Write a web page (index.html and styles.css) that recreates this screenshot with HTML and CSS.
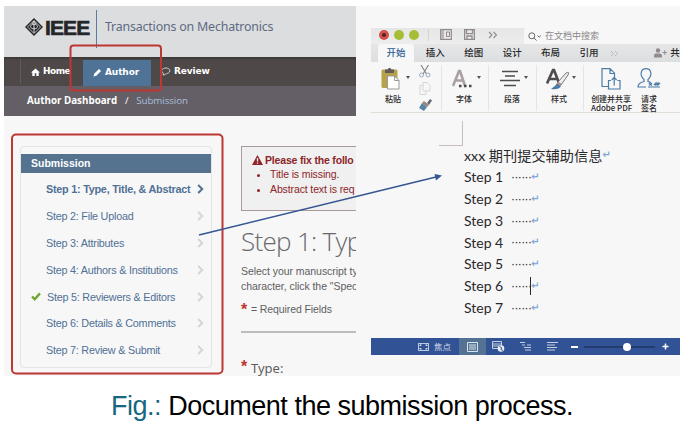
FILE: index.html
```html
<!DOCTYPE html>
<html lang="en">
<head>
<meta charset="utf-8">
<title>Document the submission process</title>
<link rel="stylesheet" href="styles.css">
</head>
<body>
<figure class="figure">
  <div class="panel">
    <section class="site">
      <header class="brand">
        <svg class="brand-mark" width="18" height="18" viewBox="0 0 18 18"><path d="M9 0 18 9 9 18 0 9Z" fill="#252629"/><path d="M9 2.500 15.500 9 9 15.500 2.500 9Z" fill="none" stroke="#dcdddf" stroke-width=".8"/><path d="M9 3v12M7 6l2-3 2 3M5.500 8.500c0 3 7 3 7 0s-7-3-7 0" fill="none" stroke="#dcdddf" stroke-width="1"/></svg>
        <strong class="brand-name">IEEE</strong>
        <span class="brand-rule"></span>
        <span class="journal">Transactions on Mechatronics</span>
      </header>
      <nav class="nav">
        <a class="nav-item home"><svg width="9" height="8" viewBox="0 0 9 8"><path d="M0 4.500 4.500.5 9 4.500H7.700V8H5.300V5.300H3.700V8H1.300V4.500Z" fill="#fff"/></svg><span>Home</span></a>
        <a class="nav-item current"><svg width="9" height="9" viewBox="0 0 9 9"><path d="m.5 8.500.7-2.800L6 .9 8.100 3 3.300 7.800Z" fill="#fff"/></svg><span>Author</span></a>
        <a class="nav-item review"><svg width="10" height="9" viewBox="0 0 10 9"><path d="M2.500 6.300C-1 4 1 1 5 1s5.500 4 1.500 5.300C5 6.700 4 8 2 8Z" fill="none" stroke="#ddd" stroke-width=".9"/></svg><span>Review</span></a>
      </nav>
      <div class="crumbs"><b>Author Dashboard</b><i>/</i><span>Submission</span></div>
      <div class="content">
        <aside class="steps">
          <h2>Submission</h2>
          <ol>
            <li class="active"><span>Step 1: Type, Title, &amp; Abstract</span><svg width="7" height="10" viewBox="0 0 7 10"><path d="m1.200 1 4 4-4 4"/></svg></li>
            <li><span>Step 2: File Upload</span><svg width="7" height="10" viewBox="0 0 7 10"><path d="m1.200 1 4 4-4 4"/></svg></li>
            <li><span>Step 3: Attributes</span><svg width="7" height="10" viewBox="0 0 7 10"><path d="m1.200 1 4 4-4 4"/></svg></li>
            <li><span>Step 4: Authors &amp; Institutions</span><svg width="7" height="10" viewBox="0 0 7 10"><path d="m1.200 1 4 4-4 4"/></svg></li>
            <li class="done"><svg class="check" width="10" height="9" viewBox="0 0 10 9"><path d="m1 4.500 2.700 2.700L9 1.400"/></svg><span>Step 5: Reviewers &amp; Editors</span><svg width="7" height="10" viewBox="0 0 7 10"><path d="m1.200 1 4 4-4 4"/></svg></li>
            <li><span>Step 6: Details &amp; Comments</span><svg width="7" height="10" viewBox="0 0 7 10"><path d="m1.200 1 4 4-4 4"/></svg></li>
            <li><span>Step 7: Review &amp; Submit</span><svg width="7" height="10" viewBox="0 0 7 10"><path d="m1.200 1 4 4-4 4"/></svg></li>
          </ol>
        </aside>
        <main class="form">
          <div class="alert">
            <h3><svg width="11" height="10" viewBox="0 0 11 10"><path d="M5.500 0 11 10H0Z" fill="#8c2528"/><path d="M5.500 3v3.500M5.500 7.500v1.300" stroke="#f3f0f0" stroke-width="1.300"/></svg>Please fix the follo</h3>
            <ul><li>Title is missing.</li><li>Abstract text is req</li></ul>
          </div>
          <h1>Step 1: Typ</h1>
          <p class="help">Select your manuscript ty<br>character, click the "Spec</p>
          <p class="required"><em>*</em>= Required Fields</p>
          <hr>
          <p class="type"><em>*</em>Type:</p>
        </main>
      </div>
    </section>
    <section class="word">
      <div class="titlebar">
        <span class="dot close"></span><span class="dot"></span><span class="dot"></span><span class="sep"></span>
        <svg class="layout-icon" width="12" height="11" viewBox="0 0 12 11"><path d="M.7.700h10.600v9.600H.7z" fill="none" stroke="#928b8e" stroke-width="1.200"/><path d="M1 1h3v9H1z" fill="#b9b4b6"/><path d="M6.500 3h3v4.500h-3z" fill="none" stroke="#928b8e"/></svg>
        <svg class="save-icon" width="11" height="11" viewBox="0 0 11 11"><path d="M.6.600h9.800v9.800H.6zM2.500.6v4h6v-4M3 10V7h5v3" fill="none" stroke="#928b8e" stroke-width="1.300"/></svg>
        <svg class="more-icon" width="10" height="8" viewBox="0 0 10 8"><path d="m1 1 3 3-3 3M5.500 1l3 3-3 3" fill="none" stroke="#928b8e" stroke-width="1.100"/></svg>
        <div class="search"><svg width="14" height="9" viewBox="0 0 14 9"><circle cx="3.800" cy="3.800" r="3" fill="none" stroke="#666" /><path d="m6 6 2.500 2.600M9.500 3.500l1.700 1.700 1.700-1.700" fill="none" stroke="#666"/></svg><span>在文档中搜索</span></div>
      </div>
      <div class="tabs"><span class="tab open">开始</span><span class="tab">插入</span><span class="tab">绘图</span><span class="tab">设计</span><span class="tab">布局</span><span class="tab">引用</span>
        <svg class="more-tabs" width="9" height="7" viewBox="0 0 9 7"><path d="m1 1 2.500 2.500L1 6M5 1l2.500 2.500L5 6" fill="none" stroke="#bbb"/></svg>
        <svg class="person" width="13" height="10" viewBox="0 0 13 10"><circle cx="4" cy="2.500" r="2.200" fill="#928b8e"/><path d="M0 9.500V7.500q0-2 2-2h4q2 0 2 2v2z" fill="#928b8e"/><path d="M8.500 4.500H13M10.700 2.300v4.500" stroke="#928b8e"/></svg><span class="share">共</span>
      </div>
      <div class="ribbon">
        <div class="group paste">
          <div class="tool"><div class="pic"><svg width="20" height="23" viewBox="0 0 20 23"><rect x=".5" y="2.500" width="16" height="18.500" rx="1.500" fill="#b7a14b"/><path d="M4 6V2.500h2.500Q8.500-1 10.500 2.500H13V6Z" fill="#62595a"/><path d="M6.500 9h7l4.500 4.500V22H6.500Z" fill="#fff" stroke="#999"/><path d="M13.500 9v4.500H18" fill="none" stroke="#999"/></svg><b class="caret"></b></div><span>粘贴</span></div>
          <div class="clip">
            <svg width="12" height="13" viewBox="0 0 12 13"><path d="m2 0 5.500 9M9.500 0 4 9" stroke="#8d8587" stroke-width="1.200"/><g fill="none" stroke="#9aabbc"><circle cx="2.500" cy="10" r="2"/><circle cx="9" cy="10" r="2"/></g></svg>
            <svg width="12" height="13" viewBox="0 0 12 13"><path d="M4 .5h4l3 3V9H4zM4 3.500H1v9h6V9" fill="none" stroke="#d5d5d7"/></svg>
            <svg width="13" height="12" viewBox="0 0 13 12"><path d="m8 4 3-4 2 1.500L10 6Z" fill="#667"/><path d="m5 2 5 4-2 2-5-4z" fill="#998579"/><path d="m3 4 5 4-3 4L0 9Z" fill="#5a84a5"/></svg>
          </div>
        </div>
        <div class="group font"><div class="tool"><div class="pic"><svg width="20" height="20" viewBox="0 0 20 20"><path d="M1 17 7 2h1l5 15M3.500 11.500h8" fill="none" stroke="#aaa0a5" stroke-width="2.600"/><path d="M7 17h2.500M12 17h2.500M17 17h2.500" stroke="#4b4548" stroke-width="2.500"/></svg><b class="caret"></b></div><span>字体</span></div></div>
        <div class="group para"><div class="tool"><div class="pic"><svg width="20" height="17" viewBox="0 0 20 17"><path d="M2 1.500h16M5 6h10M0 10.500h20M4 15.500h12" stroke="#4f4a4c" stroke-width="1.400"/></svg><b class="caret"></b></div><span>段落</span></div></div>
        <div class="group style"><div class="tool"><div class="pic"><svg width="24" height="22" viewBox="0 0 24 22"><path d="M1 15.500 7 2h1l5 13M4 11h8" fill="none" stroke="#514c50" stroke-width="2.700"/><path d="m12 14 8-9q4-2 2 2l-7 10Z" fill="#eee" stroke="#777"/><path d="M12 14q4 1 3 4-2 4-10 3 4-2 7-7Z" fill="#487baa"/><path d="m11.500 14.500 3.500 3" stroke="#b79478" stroke-width="2"/></svg><b class="caret"></b></div><span>样式</span></div></div>
        <div class="group adobe">
          <div class="tool pdf"><div class="pic"><svg width="20" height="22" viewBox="0 0 20 22"><path d="M7 18.500H1V.7h8l4.500 4.500V9M9 1v4.500h4.500M10 12.500H7.500v8.500H19v-8.500h-2.500M13.200 17.500V9.500M10.800 12l2.400-2.600 2.400 2.600" fill="none" stroke="#4b7ba7" stroke-width="1.200"/></svg></div><span>创建并共享<br>Adobe PDF</span></div>
          <div class="tool sign"><div class="pic"><svg width="24" height="21" viewBox="0 0 24 21"><path d="M9 19H1q0-4 6-5.500v-2C2 7 4 .7 9 .7s7 6.300 2 10.800v2l3 1M11 19h12M12 15l3 2.500M15 15l-3 2.500M17 17l2-2v2l2-2v2l2-2" fill="none" stroke="#4b7ba7" stroke-width="1.200"/></svg></div><span>请求<br>签名</span></div>
        </div>
      </div>
      <article class="page">
        <div class="corner"></div>
        <p class="title">xxx 期刊提交辅助信息<i>↵</i></p>
        <p><span>Step 1</span><u>······</u><i>↵</i></p>
        <p><span>Step 2</span><u>······</u><i>↵</i></p>
        <p><span>Step 3</span><u>······</u><i>↵</i></p>
        <p><span>Step 4</span><u>······</u><i>↵</i></p>
        <p><span>Step 5</span><u>······</u><i>↵</i></p>
        <p class="editing"><span>Step 6</span><u>······</u><i>↵</i></p>
        <p><span>Step 7</span><u>······</u><i>↵</i></p>
      </article>
      <footer class="status">
        <svg class="focus-icon" width="11" height="8" viewBox="0 0 11 8"><rect x=".5" y=".5" width="10" height="7" fill="none" stroke="#bdc9de"/><path d="M2 3V2h1.500M7.500 2H9v1M9 5v1H7.500M3.500 6H2V5" fill="none" stroke="#fff"/></svg><span class="focus">焦点</span>
        <span class="view"><svg width="11" height="10" viewBox="0 0 11 10"><path d="M.5.500h10v9H.5zM2 3h7M2 5h7M2 7h7" fill="none" stroke="#dce4e9"/></svg></span>
        <svg class="web-icon" width="13" height="11" viewBox="0 0 13 11"><path d="M.5.500h9v7h-9zM1 3h8M1 5h7" fill="none" stroke="#c6cfdf"/><circle cx="9" cy="7.500" r="3.300" fill="#e8edf3"/><path d="m7.500 5.500 2 1-.5 2 2 1" fill="none" stroke="#315294"/></svg>
        <svg class="outline-icon" width="12" height="9" viewBox="0 0 12 9"><path d="M0 .5h5M2 3h3M7 3h4M4 5.500h7M5 8h6" stroke="#c6cfdf"/></svg>
        <svg class="draft-icon" width="11" height="9" viewBox="0 0 11 9"><path d="M0 .5h11M0 3h8M0 5.500h10M0 8h8" stroke="#c6cfdf"/></svg>
        <span class="minus"></span><span class="slider"><span class="knob"></span></span>
        <svg class="plus" width="7" height="7" viewBox="0 0 7 7"><path d="M3.500.5v6M.5 3.500h6" stroke="#fff" stroke-width="1.500"/></svg>
      </footer>
    </section>
    <svg class="notes" width="687" height="380" viewBox="0 0 687 380">
      <rect x="70.500" y="45.500" width="90.500" height="45" rx="3" fill="none" stroke="#bd3733" stroke-width="2"/>
      <rect x="12" y="134.500" width="210.500" height="239" rx="4" fill="none" stroke="#bd3733" stroke-width="2"/>
      <path d="M199 235 436 177" stroke="#365692" stroke-width="1.600"/><path d="m434.500 174 7.500 1.500-6 5Z" fill="#365692"/>
    </svg>
  </div>
  <figcaption><span>Fig.:</span> Document the submission process.</figcaption>
</figure>
</body>
</html>
```
FILE: styles.css
```css
* { box-sizing: border-box; }
body { margin: 0; width: 687px; height: 426px; overflow: hidden; background: #fff; font-family: "Liberation Sans", "Noto Sans CJK SC", sans-serif; }
figure, p, h1, h2, h3, ol, ul { margin: 0; padding: 0; }
svg { flex: none; }
.figure { padding: 6px 7px 0 4px; }
.panel { display: flex; width: 676px; height: 370px; background: #f7f7f7; }
.notes { position: absolute; left: 0; top: 0; }

.site { width: 352px; height: 370px; overflow: hidden; white-space: nowrap; }
.brand { display: flex; height: 51px; background: #dcdddf; }
.brand-mark { margin: 12px 0 0 21px; }
.brand-name { width: 51px; margin-left: 2px; padding-top: 9px; color: #252629; font: 700 21px/25px "Liberation Sans", sans-serif; letter-spacing: -.9px; -webkit-text-stroke: .6px #252629; }
.brand-rule { width: 1px; height: 38px; margin-top: 4px; background: #5a7da5; }
.journal { margin: 9px 0 0 8px; color: #5d6a82; font: 12.400px/24px "Noto Sans", sans-serif; letter-spacing: -.18px; }
.nav { display: flex; height: 29px; background: #4f4848; box-shadow: inset 0 2px 2px #3e3838; color: #fff; font: 700 9px/21px "DejaVu Sans", sans-serif; }
.nav-item { display: flex; align-items: center; gap: 3px; height: 25px; margin-top: 2px; letter-spacing: -.1px; }
.home { width: 63px; margin-left: 16px; padding-left: 10px; border-left: 1px solid #605a5a; }
.home span { letter-spacing: -.5px; }
.current { width: 68px; height: 26px; margin-top: 3px; padding: 0 0 2px 10px; background: #4f7297; }
.review { padding-left: 10px; }
.crumbs { display: flex; height: 30px; padding-left: 23px; background: #645f66; color: #fff; font: 9.800px/30px "Open Sans", sans-serif; }
.crumbs i { width: 19px; text-align: center; font-style: normal; }
.crumbs span { color: #a9bfdd; letter-spacing: -.1px; }

.content { display: flex; height: 260px; }
.steps { width: 192px; height: 222px; margin: 30px 29px 0 16px; padding-top: 7px; border: 1px solid #e4e4e5; border-radius: 4px; }
.steps h2 { height: 19px; padding-left: 10px; background: #55738f; color: #fff; font-size: 10.500px; line-height: 19px; }
.steps ol { padding-top: 3px; list-style: none; }
.steps li { display: flex; align-items: center; justify-content: space-between; height: 26.800px; padding: 0 7px 0 25px; color: #507096; font-size: 10.800px; letter-spacing: -.23px; }
.steps li svg { fill: none; stroke: #d4d5d7; stroke-width: 2; }
.steps .active { font-weight: 700; }
.steps .active svg { stroke: #507096; }
.steps .done { padding-left: 10px; justify-content: flex-start; gap: 6px; }
.done svg:last-child { margin-left: auto; }
.steps .done .check { stroke: #72a52f; stroke-width: 2.400; }
.form { width: 115px; overflow: hidden; color: #5e5e61; }
.alert { width: 150px; height: 65px; margin-top: 30px; padding: 6px 0 0 10px; border: 1px solid #a9999b; background: #f0f0f0; color: #8c2528; }
.alert h3 { display: flex; align-items: center; gap: 2px; height: 14px; font-size: 10.500px; letter-spacing: -.18px; }
.alert ul { padding-left: 18px; font-size: 10.500px; line-height: 15px; letter-spacing: -.12px; }
h1 { margin-top: 11px; height: 38px; color: #69676b; font: 300 26px/38px "Open Sans", sans-serif; letter-spacing: -.7px; }
.help { margin-top: 4px; font-size: 10.500px; line-height: 15px; letter-spacing: -.05px; }
.required { display: flex; margin-top: 7px; height: 16px; font-size: 10.500px; line-height: 16px; letter-spacing: -.1px; }
em { width: 10px; color: #bd3430; font: 700 16px/17px "Liberation Sans", sans-serif; }
hr { height: 2px; margin: 14px 0 0; border: 0; background: #bdbdbe; }
.type { display: flex; margin-top: 25px; font: 13px/20px "Noto Sans", sans-serif; }

.word { width: 309px; margin-left: 15px; padding-top: 22px; }
.titlebar { display: flex; align-items: center; height: 16px; padding: 0 0 3px 8px; background: linear-gradient(#e6e6e7, #ededee); }
.dot { width: 10px; height: 10px; margin-right: 5px; border-radius: 50%; background: #a6be35; }
.close { background: radial-gradient(circle, #562523 0 1.500px, #d3504c 2.500px); }
.sep { width: 1px; height: 12px; margin-left: 4px; background: #d3d3d4; }
.layout-icon { margin-left: 11px; }
.save-icon { margin-left: 12px; }
.more-icon { margin-left: 13px; }
.search { display: flex; align-items: center; gap: 3px; width: 156px; height: 16px; margin: 3px 0 0 auto; padding-left: 4px; border-radius: 3px 0 0; background: #f7f7f7; color: #8b8689; font: 9px/16px "Noto Sans CJK SC", sans-serif; }
.tabs { display: flex; height: 18px; padding-left: 7px; background: linear-gradient(#e5e6e7, #dcdee0); font: 500 9.500px/17px "Noto Sans CJK SC", sans-serif; color: #29282a; }
.tab { width: 39.300px; text-align: center; }
.open { width: 37px; margin-right: 2px; border-radius: 3px 3px 0 0; background: #f7f7f7; color: #325d96; }
.more-tabs { margin: 6px 0 0 2px; }
.person { margin: 4px 0 0 35px; }
.share { width: 10px; margin-left: 3px; white-space: nowrap; }
.ribbon { display: flex; height: 51px; padding-top: 3px; border-bottom: 1px solid #dedfd7; color: #29282a; font: 500 8px/10px "Noto Sans CJK SC", sans-serif; }
.group { display: flex; height: 46px; border-right: 1px solid #e5e5e6; }
.tool { text-align: center; }
.tool > span { display: block; white-space: nowrap; }
.pic { display: flex; align-items: center; height: 27px; margin-bottom: 2px; }
.caret { border: 2px solid transparent; border-top: 3px solid #555; margin-left: 5px; }
.paste { width: 71px; padding-left: 10px; }
.paste .tool > span { width: 24px; }
.clip { display: flex; flex-direction: column; justify-content: space-between; margin-left: 9px; }
.font { width: 47px; padding-left: 10px; }
.font .tool > span { width: 24px; }
.para { width: 48px; padding-left: 11px; }
.para .tool > span { width: 24px; }
.para .caret { margin-left: 4px; }
.style { width: 47px; padding-left: 9px; }
.style .caret { margin-left: 2px; }
.style .tool > span { width: 26px; }
.adobe { border: 0; padding-left: 7px; }
.pdf { width: 40px; }
.sign { width: 24px; margin-left: 6px; }
.adobe .tool > span { line-height: 9px; letter-spacing: -.05px; }
.adobe .pic { justify-content: center; }
.page { height: 225px; padding: 8px 0 0 93px; color: #29282a; font: 14px/21.700px Lato, "Noto Sans CJK SC", sans-serif; }
.corner { width: 24px; height: 25px; margin: 0 0 -1.500px -25px; border-right: 1px solid #c9bdc0; border-bottom: 1px solid #c9bdc0; }
.page p { display: flex; align-items: center; height: 21.750px; white-space: pre; }
.page .title { font-size: 14.200px; }
.page p > span { width: 47px; }
.page u { width: 20px; text-decoration: none; font: 12px/20px "Liberation Sans", sans-serif; letter-spacing: -.6px; }
.page i { color: #84a8d3; font: 700 10px/18px "DejaVu Sans", sans-serif; }
.editing i { border-left: 1px solid #29282a; margin-left: -1px; }
.status { display: flex; align-items: center; height: 17px; padding-left: 47px; background: #315294; color: #d2dbea; font: 8.500px/17px "Noto Sans CJK SC", sans-serif; }
.focus { margin-left: 5px; width: 25px; }
.view { display: flex; align-items: center; justify-content: center; width: 27px; height: 17px; background: #547294; }
.web-icon { margin-left: 6px; }
.outline-icon { margin-left: 15px; }
.draft-icon { margin-left: 15px; }
.minus { width: 7px; height: 2px; margin-left: 13px; background: #fff; }
.slider { display: flex; align-items: center; width: 71px; height: 2px; margin-left: 6px; background: #243d70; }
.knob { width: 8px; height: 8px; margin-left: 39px; border-radius: 50%; background: #fff; }
.plus { margin-left: 7px; }
figcaption { margin: 13px 0 0 107px; color: #000; font: 27px/34px "Liberation Sans", sans-serif; letter-spacing: -.48px; white-space: nowrap; }
figcaption span { color: #176782; }
```
